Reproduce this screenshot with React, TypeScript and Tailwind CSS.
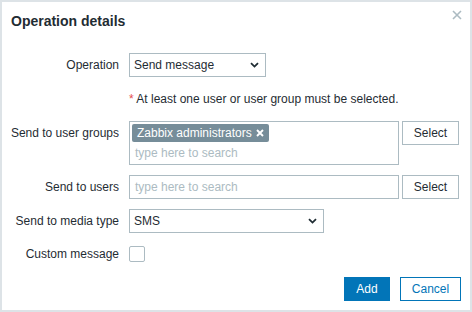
const Chevron = () => (
  <svg width="9" height="6" viewBox="0 0 9 6" className="shrink-0">
    <path d="M1 1.2 L4.5 4.6 L8 1.2" fill="none" stroke="#1f2c33" strokeWidth="1.8" />
  </svg>
);

const Label = ({ children }: { children: React.ReactNode }) => (
  <div className="w-[117px] shrink-0 text-right leading-[24px]">{children}</div>
);

const App = () => {
  return (
    <div
      className="relative w-[472px] h-[312px] bg-white border-2 border-[#dde3e7] text-[12px] text-[#1f2c33]"
      style={{ fontFamily: '"Liberation Sans", Arial, sans-serif' }}
    >
      {/* Header */}
      <div className="pl-[9px] pt-[11px]">
        <h4 className="text-[14px] leading-[16px] font-bold">Operation details</h4>
      </div>
      <button className="absolute right-[8px] top-[8px] w-[10px] h-[10px] flex items-center justify-center">
        <svg width="10" height="10" viewBox="0 0 10 10">
          <path d="M1 1 L9 9 M9 1 L1 9" stroke="#acbbc2" strokeWidth="1.6" />
        </svg>
      </button>

      {/* Operation */}
      <div className="flex mt-[24px]">
        <Label>Operation</Label>
        <div className="ml-[10px] w-[137px] h-[24px] border border-[#acbbc2] flex items-center justify-between pl-[4px] pr-[6px]">
          <span>Send message</span>
          <Chevron />
        </div>
      </div>

      {/* Hint */}
      <div className="flex mt-[15px]">
        <div className="w-[117px] shrink-0" />
        <div className="ml-[10px] leading-[14px]">
          <span className="text-[#e54e4e]">*</span> At least one user or user group must be selected.
        </div>
      </div>

      {/* User groups */}
      <div className="flex mt-[15px] items-start">
        <Label>Send to user groups</Label>
        <div className="ml-[10px] w-[270px] h-[44px] border border-[#acbbc2] pt-[2px] pl-[2px]">
          <div className="inline-flex items-center h-[18px] rounded-[2px] bg-[#768d99] text-white pl-[5px] pr-[5px] gap-[4px]">
            <span className="leading-[18px]">Zabbix administrators</span>
            <svg width="8" height="8" viewBox="0 0 8 8">
              <path d="M1 1 L7 7 M7 1 L1 7" stroke="#ffffff" strokeWidth="1.9" />
            </svg>
          </div>
          <div className="h-[22px] leading-[22px] pl-[3px] text-[#acbbc2]">type here to search</div>
        </div>
        <button className="ml-[3px] w-[57px] h-[24px] border border-[#acbbc2] bg-white text-[#1f2c33]">
          Select
        </button>
      </div>

      {/* Users */}
      <div className="flex mt-[10px]">
        <Label>Send to users</Label>
        <div className="ml-[10px] w-[270px] h-[24px] border border-[#acbbc2] pl-[5px] leading-[22px] text-[#acbbc2]">
          type here to search
        </div>
        <button className="ml-[3px] w-[57px] h-[24px] border border-[#acbbc2] bg-white text-[#1f2c33]">
          Select
        </button>
      </div>

      {/* Media type */}
      <div className="flex mt-[10px]">
        <Label>Send to media type</Label>
        <div className="ml-[10px] w-[195px] h-[24px] border border-[#acbbc2] flex items-center justify-between pl-[4px] pr-[6px]">
          <span>SMS</span>
          <Chevron />
        </div>
      </div>

      {/* Custom message */}
      <div className="flex mt-[9px] items-center">
        <Label>Custom message</Label>
        <div className="ml-[10px] w-[16px] h-[16px] border border-[#acbbc2] rounded-[2px] bg-white" />
      </div>

      {/* Footer */}
      <div className="flex justify-end gap-[10px] mt-[11px] pr-[9px]">
        <button className="w-[46px] h-[24px] bg-[#0275b8] text-white">Add</button>
        <button className="w-[61px] h-[24px] border border-[#0275b8] text-[#0275b8] bg-white">Cancel</button>
      </div>
    </div>
  );
};

export default App;
